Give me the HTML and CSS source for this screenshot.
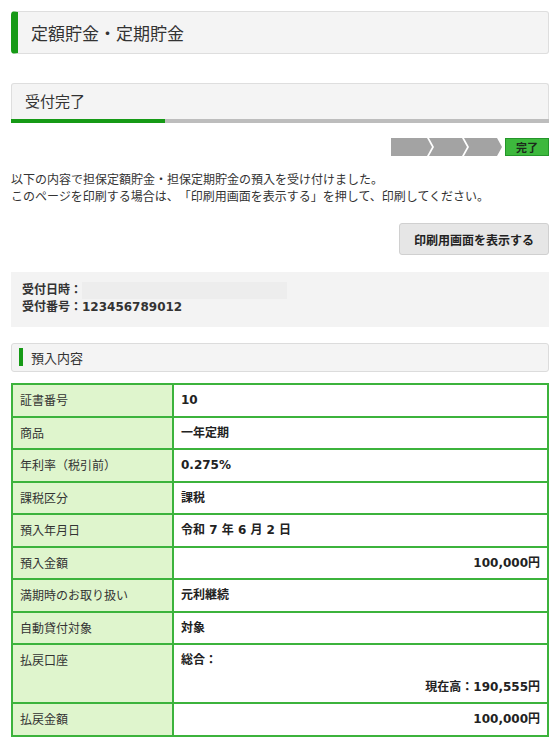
FILE: index.html
```html
<!DOCTYPE html>
<html lang="ja">
<head>
<meta charset="utf-8">
<title>定額貯金・定期貯金</title>
<link rel="stylesheet" href="styles.css">
</head>
<body>
<div class="page">
  <h1 class="page-title">定額貯金・定期貯金</h1>

  <div class="status">
    <h2 class="status-title">受付完了</h2>
    <div class="status-bar"><div class="status-fill"></div></div>
  </div>

  <div class="steps">
    <svg class="steps-svg" width="112" height="18" viewBox="0 0 112 18">
      <polygon points="0,0 36,0 41,9 36,18 0,18" fill="#a3a3a3"/>
      <polygon points="38,0 71,0 76,9 71,18 38,18 43,9" fill="#a3a3a3"/>
      <polygon points="73,0 106,0 111,9 106,18 73,18 78,9" fill="#a3a3a3"/>
    </svg>
    <div class="step-done">完了</div>
  </div>

  <p class="lead">以下の内容で担保定額貯金・担保定期貯金の預入を受け付けました。<br>このページを印刷する場合は、「印刷用画面を表示する」を押して、印刷してください。</p>

  <div class="actions">
    <button class="print-btn" type="button">印刷用画面を表示する</button>
  </div>

  <div class="receipt">
    <div class="receipt-row">受付日時：<span class="blank"></span></div>
    <div class="receipt-row">受付番号：123456789012</div>
  </div>

  <h3 class="section-title">預入内容</h3>

  <table class="detail">
    <tr><th>証書番号</th><td>10</td></tr>
    <tr><th>商品</th><td>一年定期</td></tr>
    <tr><th>年利率（税引前）</th><td>0.275%</td></tr>
    <tr><th>課税区分</th><td>課税</td></tr>
    <tr><th>預入年月日</th><td>令和 7 年 6 月 2 日</td></tr>
    <tr><th>預入金額</th><td class="num">100,000円</td></tr>
    <tr><th>満期時のお取り扱い</th><td>元利継続</td></tr>
    <tr><th>自動貸付対象</th><td>対象</td></tr>
    <tr><th>払戻口座</th><td><div>総合：</div><div class="balance">現在高：190,555円</div></td></tr>
    <tr><th>払戻金額</th><td class="num">100,000円</td></tr>
  </table>
</div>
</body>
</html>
```

FILE: styles.css
```css
* { box-sizing: border-box; }
html, body { margin: 0; padding: 0; background: #fff; }
body {
  font-family: "DejaVu Sans", "Noto Sans CJK JP", sans-serif;
  color: #333;
  font-size: 12px;
  text-spacing-trim: space-all;
}
.page { padding: 11px 11px 0 11px; }

.page-title {
  margin: 0;
  height: 43px;
  line-height: 41px;
  font-size: 17px;
  font-weight: normal;
  font-family: "Noto Sans CJK JP", sans-serif;
  background: #f4f4f4;
  border: 1px solid #dedede;
  border-left: 7px solid #169a16;
  border-radius: 4px 3px 3px 4px;
  padding-left: 13px;
}

.status { margin-top: 29px; }
.status-title {
  margin: 0;
  height: 36px;
  line-height: 34px;
  font-size: 15px;
  font-weight: normal;
  font-family: "Noto Sans CJK JP", sans-serif;
  background: #f4f4f4;
  border: 1px solid #dedede;
  border-bottom: none;
  border-radius: 3px 3px 0 0;
  padding-left: 13px;
}
.status-bar { height: 4px; background: #bdbdbd; }
.status-fill { width: 154px; height: 4px; background: #169a16; }

.steps {
  margin-top: 15px;
  display: flex;
  justify-content: flex-end;
  height: 18px;
}
.steps-svg { display: block; }
.step-done {
  width: 44px;
  height: 18px;
  margin-left: 2px;
  background: #3db83d;
  border: 1px solid #24962a;
  font-family: "Noto Sans CJK JP", sans-serif;
  font-weight: bold;
  font-size: 11px;
  line-height: 16px;
  text-align: center;
  color: #1c2a1c;
}

.lead {
  margin: 14px 0 0 0;
  font-family: "Noto Sans CJK JP", sans-serif;
  font-size: 12px;
  line-height: 17px;
}

.actions {
  margin-top: 19px;
  display: flex;
  justify-content: flex-end;
}
.print-btn {
  width: 150px;
  height: 32px;
  background: #e6e6e6;
  border: 1px solid #d0d0d0;
  border-radius: 3px;
  font-family: "Noto Sans CJK JP", sans-serif;
  font-weight: bold;
  font-size: 12px;
  color: #222;
  padding: 0;
}

.receipt {
  margin-top: 17px;
  height: 55px;
  background: #f3f3f3;
  padding: 10px 11px 0 11px;
  font-weight: bold;
  line-height: 17px;
}
.receipt-row { display: flex; align-items: center; }
.blank {
  display: inline-block;
  width: 205px;
  height: 17px;
  background: #ededed;
  margin-left: 0;
}

.section-title {
  margin: 16px 0 0 0;
  height: 29px;
  border: 1px solid #dcdcdc;
  border-radius: 3px;
  background: #f4f4f4;
  font-family: "Noto Sans CJK JP", sans-serif;
  font-weight: normal;
  font-size: 13px;
  line-height: 27px;
  padding-left: 19px;
  position: relative;
}
.section-title::before {
  content: "";
  position: absolute;
  left: 7px;
  top: 4px;
  width: 4px;
  height: 18px;
  background: #169a16;
}

.detail {
  margin-top: 11px;
  width: 100%;
  border-collapse: collapse;
  border: 2px solid #3cb33c;
}
.detail th, .detail td {
  border: 2px solid #3cb33c;
  padding: 6px 7px;
  line-height: 18.5px;
  font-size: 12px;
  text-align: left;
  vertical-align: top;
}
.detail th {
  width: 161px;
  background: #dff5cd;
  font-weight: normal;
  font-family: "Noto Sans CJK JP", sans-serif;
  color: #333;
}
.detail td {
  font-weight: bold;
  color: #222;
}
.detail td.num { text-align: right; }
.balance { text-align: right; margin-top: 8px; }
```
